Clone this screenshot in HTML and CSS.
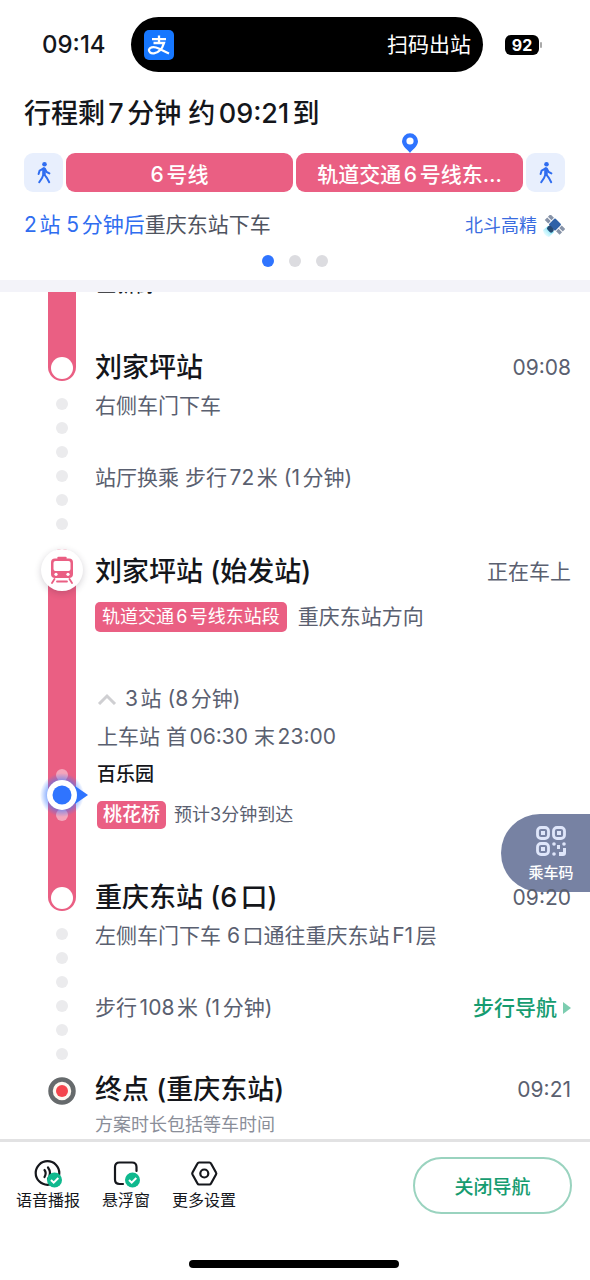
FILE: index.html
```html
<!DOCTYPE html>
<html lang="zh-CN">
<head>
<meta charset="utf-8">
<meta name="viewport" content="width=device-width, initial-scale=1">
<title>行程导航</title>
<link rel="stylesheet" href="styles.css">
</head>
<body>
<div class="status">
  <time class="clock">09:14</time>
  <div class="island">
    <svg class="pay" viewBox="0 0 30 30" aria-hidden="true">
      <rect width="30" height="30" rx="5" fill="#1677ff"/>
      <path d="M8 9.2H22M15 5.5V13M9.5 13H20C18.8 17 15.5 22.5 10 23.3C6.5 23.8 4.5 21.8 5 19.6C5.6 17.4 9 16.6 12 17.5C16 18.7 20 21.5 25 23.5" fill="none" stroke="#fff" stroke-width="2.3"/>
    </svg>
    <span>扫码出站</span>
  </div>
  <div class="battery"><span class="level">92</span><span class="cap"></span></div>
</div>

<header class="summary">
  <h1>行程剩7分钟 约09:21到</h1>
  <div class="segments">
    <span class="walk">
      <svg viewBox="0 0 20 24" aria-hidden="true"><circle cx="10.5" cy="3.3" r="2.3"/><path d="M10 7.5L9.6 14M9.6 7.5L5.6 9.7L4.600 13M11 8L12.600 11L15.400 12.400M9.4 13.5L8 17L5.200 21.200M10.3 13.5L12.800 16.8L15.200 21.200"/><path d="M10 8V13" stroke-width="3.500"/></svg>
    </span>
    <span class="line">6号线</span>
    <span class="line current"><span class="line-text">轨道交通6号线东…</span>
      <svg class="pin" viewBox="0 0 18 20" aria-hidden="true"><path d="M9 20C7 17 1 13.5 1 8.3A8 8 0 0 1 17 8.3C17 13.5 11 17 9 20Z" fill="#2f74ff"/><circle cx="9" cy="8" r="3.6" fill="#fff"/></svg>
    </span>
    <span class="walk">
      <svg viewBox="0 0 20 24" aria-hidden="true"><circle cx="10.5" cy="3.3" r="2.3"/><path d="M10 7.5L9.6 14M9.6 7.5L5.6 9.7L4.600 13M11 8L12.600 11L15.400 12.400M9.4 13.5L8 17L5.200 21.200M10.3 13.5L12.800 16.8L15.200 21.200"/><path d="M10 8V13" stroke-width="3.500"/></svg>
    </span>
  </div>
  <div class="hint">
    <p><b>2站 5分钟后</b>重庆东站下车</p>
    <span class="gps">北斗高精
      <svg viewBox="0 0 22 22" aria-hidden="true">
        <defs><linearGradient id="beam" x1="1" y1="0" x2="0" y2="1"><stop offset="0" stop-color="#21c8ee"/><stop offset="1" stop-color="#8ff3ff" stop-opacity="0"/></linearGradient></defs>
        <path d="M5 11L11 17L6 22Q1 21 0 15Z" fill="url(#beam)"/>
        <g transform="rotate(45 12 9.500)">
          <rect x="7.500" y="5" width="9" height="9" rx="1" fill="#2f62a8"/>
          <rect x="8.500" y="13.500" width="7" height="5" rx="2" fill="#264a73"/>
          <path d="M1.500 5.500h5v3.500h-5zM1.500 10h5v3.500h-5zM17.500 5.500h5v3.500h-5zM17.500 10h5v3.500h-5z" fill="#8793a8"/>
        </g>
      </svg>
    </span>
  </div>
  <div class="pager"><i class="on"></i><i></i><i></i></div>
</header>

<main class="route">
  <section class="leg first">
    <div class="rail"><span class="ring"></span></div>
    <div class="body">
      <p class="stop passed">上新街</p>
      <div class="row"><h2>刘家坪站</h2><time>09:08</time></div>
    </div>
  </section>

  <section class="leg onfoot">
    <div class="dots"><i></i><i></i><i></i><i></i><i></i><i></i></div>
    <div class="body">
      <p>右侧车门下车</p>
      <p class="transfer">站厅换乘 步行72米 (1分钟)</p>
    </div>
  </section>

  <section class="leg ride">
    <div class="rail">
      <span class="train">
        <svg viewBox="0 0 26 28" aria-hidden="true"><path d="M9.500 2h7" stroke="#ea5f83" stroke-width="2.500" stroke-linecap="round"/><rect x="2" y="2.500" width="22" height="19.500" rx="4" fill="#ea5f83"/><rect x="4.500" y="5" width="17" height="10" rx="2" fill="#fff"/><circle cx="7" cy="18.300" r="1.600" fill="#fff"/><circle cx="19" cy="18.300" r="1.600" fill="#fff"/><path d="M5.500 23L3 27M20.500 23L23 27M8 25.500h10" stroke="#ea5f83" stroke-width="1.800" stroke-linecap="round"/></svg>
      </span>
      <span class="ring"></span>
    </div>
    <div class="body">
      <div class="row start"><h2>刘家坪站 (始发站)</h2><span>正在车上</span></div>
      <div class="direction"><span class="tag">轨道交通6号线东站段</span><span>重庆东站方向</span></div>
      <button class="fold" type="button"><svg viewBox="0 0 20 12" aria-hidden="true"><path d="M2 11L10 3L18 11" fill="none" stroke="#cfcfd2" stroke-width="3"/></svg>3站 (8分钟)</button>
      <p class="hours">上车站 首06:30 末23:00</p>
      <div class="stops">
        <svg class="locator" viewBox="0 0 60 60" aria-hidden="true">
          <defs><radialGradient id="glow"><stop offset=".55" stop-color="#3a78ff" stop-opacity=".75"/><stop offset="1" stop-color="#3a78ff" stop-opacity="0"/></radialGradient></defs>
          <circle cx="30" cy="10" r="6" fill="#f4a5bb"/><circle cx="30" cy="50" r="6" fill="#f4a5bb"/>
          <circle cx="30" cy="30" r="22" fill="url(#glow)"/>
          <path d="M43 21L56 30L43 39Z" fill="#2f74ff"/>
          <circle cx="30" cy="30" r="15" fill="#fff"/><circle cx="30" cy="30" r="9.500" fill="#2f74ff"/>
        </svg>
        <p class="stop">百乐园</p>
        <p class="next"><span class="tag small">桃花桥</span>预计3分钟到达</p>
      </div>
      <div class="row"><h2>重庆东站 (6口)</h2><time>09:20</time></div>
    </div>
  </section>

  <section class="leg onfoot">
    <div class="dots"><i></i><i></i><i></i><i></i><i></i><i></i></div>
    <div class="body">
      <p>左侧车门下车 6口通往重庆东站F1层</p>
      <div class="row transfer"><p>步行108米 (1分钟)</p>
        <a class="guide" href="#walk">步行导航<svg viewBox="0 0 8 14" aria-hidden="true"><path d="M0 1L8 7L0 13Z" fill="#7ccdb0"/></svg></a>
      </div>
    </div>
  </section>

  <section class="leg end">
    <svg class="target" viewBox="0 0 28 28" aria-hidden="true"><circle cx="14" cy="14" r="11.500" fill="#fdf8f0" stroke="#666a6c" stroke-width="4.500"/><circle cx="14" cy="14" r="6" fill="#f4454c"/></svg>
    <div class="body">
      <div class="row"><h2>终点 (重庆东站)</h2><time>09:21</time></div>
      <p class="note">方案时长包括等车时间</p>
    </div>
  </section>

  <button class="code" type="button">
    <svg viewBox="0 0 30 30" aria-hidden="true" fill="none" stroke="#dfe6fa" stroke-width="2.800"><rect x="1.500" y="1.500" width="11" height="11" rx="3.500"/><rect x="17.500" y="1.500" width="11" height="11" rx="3.500"/><rect x="1.500" y="17.500" width="11" height="11" rx="3.500"/><g fill="#dfe6fa" stroke="none"><rect x="5" y="5" width="4" height="4"/><rect x="21" y="5" width="4" height="4"/><rect x="5" y="21" width="4" height="4"/><circle cx="18" cy="18" r="1.800"/><circle cx="28" cy="18" r="1.800"/><circle cx="18" cy="28" r="1.800"/><path d="M21 19h3v4h-3zM27 22h3v5q0 3-3 3h-4v-4h4z"/></g></svg>
    <span>乘车码</span>
  </button>
</main>

<footer class="bar">
  <nav class="tools">
    <button type="button">
      <svg viewBox="0 0 28 28" aria-hidden="true"><g fill="none" stroke="#15171c" stroke-width="2.200" stroke-linecap="round"><circle cx="13.500" cy="13" r="11.800"/><path d="M10.500 10Q12.800 13 10.500 17M14 7.500Q18 13 14 19"/></g><circle cx="20.500" cy="20" r="7.500" fill="#0fb98e"/><path d="M17 20L19.700 22.700L24.300 18" fill="none" stroke="#fff" stroke-width="2"/></svg>
      <span>语音播报</span>
    </button>
    <button type="button">
      <svg viewBox="0 0 28 28" aria-hidden="true"><path d="M11 24H7.500Q3 24 3 19.500V7Q3 2.500 7.500 2.500H20Q24.500 2.500 24.500 7V11" fill="none" stroke="#15171c" stroke-width="2.200" stroke-linecap="round"/><circle cx="20.500" cy="20" r="7.500" fill="#0fb98e"/><path d="M17 20L19.700 22.700L24.300 18" fill="none" stroke="#fff" stroke-width="2"/></svg>
      <span>悬浮窗</span>
    </button>
    <button type="button">
      <svg viewBox="0 0 28 28" aria-hidden="true"><g fill="none" stroke="#15171c" stroke-width="2.200" stroke-linejoin="round"><path d="M9 2.500H19.500Q20.500 2.500 21 3.500L26 12.500Q26.600 13.500 26 14.500L21 23.500Q20.500 24.500 19.500 24.500H9Q8 24.500 7.500 23.500L2.500 14.500Q2 13.500 2.500 12.500L7.500 3.500Q8 2.500 9 2.500Z"/><circle cx="14.300" cy="13.500" r="4"/></g></svg>
      <span>更多设置</span>
    </button>
  </nav>
  <button class="close" type="button">关闭导航</button>
  <div class="home"></div>
</footer>
</body>
</html>
```
FILE: styles.css
```css
* { box-sizing: border-box; }

body {
  margin: 0;
  min-height: 100vh;
  display: flex;
  flex-direction: column;
  background: #fff;
  color: #14161b;
  font-family: Inter, "Noto Sans CJK SC", sans-serif;
  text-autospace: normal;
}

h1, h2, p { margin: 0; font-weight: 500; }
button { font: inherit; color: inherit; border: 0; padding: 0; background: none; cursor: pointer; }
svg { display: block; flex: none; }

.status {
  display: grid;
  grid-template-columns: 109px 1fr 85px;
  gap: 22px;
  align-items: center;
  padding-top: 17px;
}
.clock { padding-left: 42px; font-size: 24px; line-height: 28px; font-weight: 500; }
.island {
  height: 55px;
  padding: 0 12px 0 13px;
  border-radius: 28px;
  background: #000;
  color: #fff;
  font-size: 21px;
  line-height: 24px;
  display: flex;
  align-items: center;
  justify-content: space-between;
}
.pay { width: 30px; height: 30px; }
.battery { display: flex; align-items: center; gap: 1px; }
.level {
  width: 34px;
  border-radius: 6px;
  background: #000;
  color: #fff;
  font-size: 16px;
  line-height: 20px;
  font-weight: 700;
  text-align: center;
}
.cap { width: 2px; height: 6px; border-radius: 2px; background: #aaa; }

.summary { padding: 24px 25px 13px 24px; border-bottom: 12px solid #f3f3f9; }
.summary h1 { font-size: 27px; line-height: 36px; }
.segments { display: flex; gap: 3px; margin-top: 21px; }
.walk, .line {
  height: 39px;
  border-radius: 9px;
  display: flex;
  align-items: center;
  justify-content: center;
}
.walk { width: 39px; flex: none; background: #e8effd; }
.walk svg { width: 20px; height: 24px; fill: #2f6df0; stroke: #2f6df0; stroke-width: 2; stroke-linecap: round; }
.walk path { fill: none; }
.walk circle { stroke: none; }
.line {
  flex: 1 1 0;
  min-width: 0;
  padding: 0 12px;
  position: relative;
  background: #ea5f83;
  color: #fff;
  font-size: 21px;
  font-weight: 500;
}
.line-text { overflow: hidden; text-overflow: ellipsis; white-space: nowrap; }
.pin { position: absolute; left: 50%; bottom: 100%; width: 18px; height: 20px; margin-left: -9px; }
.hint { display: flex; justify-content: space-between; align-items: center; margin-top: 19px; }
.hint p { font-size: 21px; line-height: 28px; font-weight: 400; color: #4f545f; }
.hint b { font-weight: 400; color: #2f6df0; }
.gps { display: flex; align-items: center; gap: 6px; padding-top: 2px; font-size: 18px; line-height: 26px; color: #3a6ce0; }
.gps svg { width: 22px; height: 22px; }
.pager { display: flex; justify-content: center; gap: 15px; margin-top: 16px; }
.pager i { width: 12px; height: 12px; border-radius: 50%; background: #dcdce0; }
.pager .on { background: #2f74ff; }

.route { flex: 1; position: relative; overflow: hidden; }
.leg {
  display: grid;
  grid-template-columns: 28px minmax(0, 1fr);
  gap: 19px;
  padding: 0 19px 0 48px;
}
.leg p { font-size: 21px; line-height: 28px; font-weight: 400; color: #5a6070; }
.rail {
  display: flex;
  flex-direction: column;
  justify-content: space-between;
  align-items: center;
  border-radius: 0 0 14px 14px;
  background: #ea5f83;
}
.ring { width: 22px; height: 22px; margin: auto 0 2px; border-radius: 50%; background: #fff; }
.row { display: flex; align-items: center; justify-content: space-between; }
.row h2 { font-size: 27px; line-height: 26px; }
.row time, .row > span { position: relative; z-index: 2; font-size: 21px; line-height: 26px; color: #5a6070; }

.leg .stop { font-size: 19px; line-height: 28px; font-weight: 500; color: #14161b; padding-left: 2px; }
.first .passed { margin: -20px 0 55px; }

.onfoot { min-height: 166px; }
.dots { display: flex; flex-direction: column; align-items: center; gap: 12px; padding-top: 17px; }
.dots i { width: 12px; height: 12px; border-radius: 50%; background: #ebebed; }
.onfoot .body { padding-top: 11px; }
.onfoot .transfer { margin-top: 44px; }

.ride { padding-top: 2px; }
.ride .rail { border-top-left-radius: 14px; border-top-right-radius: 14px; }
.train {
  width: 42px;
  height: 42px;
  border-radius: 50%;
  background: #fff;
  box-shadow: 0 2px 7px rgba(40, 30, 50, .2);
  display: grid;
  place-items: center;
}
.train svg { width: 26px; height: 28px; }
.start { height: 46px; }
.direction { display: flex; align-items: center; gap: 11px; margin-top: 7px; font-size: 21px; line-height: 30px; color: #5a6070; }
.tag { padding: 0 7px; border-radius: 5px; background: #ea5f83; color: #fff; font-size: 18px; line-height: 30px; }
.fold {
  display: flex;
  align-items: center;
  gap: 8px;
  margin-top: 53px;
  padding-left: 2px;
  font-size: 21px;
  line-height: 28px;
  color: #5a6070;
}
.fold svg { width: 20px; height: 12px; }
.leg .hours { margin-top: 10px; padding-left: 2px; }
.stops { position: relative; margin: 10px 0 56px; }
.locator { position: absolute; left: -63px; top: 50%; width: 60px; height: 60px; margin-top: -30px; }
.leg .next { display: flex; align-items: center; gap: 8px; margin-top: 12px; padding-left: 2px; font-size: 18px; text-autospace: no-autospace; }
.small { padding: 0 6px; font-size: 19px; line-height: 28px; font-weight: 500; }

.leg .guide { display: flex; align-items: center; gap: 6px; color: #169c70; font-size: 21px; line-height: 28px; font-weight: 500; text-decoration: none; }
.guide svg { width: 8px; height: 14px; }
.target { width: 28px; height: 28px; }
.leg .note { margin-top: 9px; font-size: 18px; line-height: 26px; color: #8a8e99; }

.code {
  position: absolute;
  right: 0;
  bottom: 247px;
  z-index: 1;
  width: 89px;
  height: 78px;
  padding: 4px 0 0 11px;
  border-radius: 39px 0 0 39px;
  background: #7782a3;
  color: #fff;
  font-size: 15px;
  line-height: 22px;
  font-weight: 500;
  display: flex;
  flex-direction: column;
  align-items: center;
  justify-content: center;
  gap: 6px;
}
.code svg { width: 30px; height: 30px; }

.bar {
  display: grid;
  grid-template-columns: 1fr 159px;
  align-items: center;
  padding: 15px 18px 12px 16px;
  border-top: 3px solid #e2e2e3;
}
.tools { display: flex; gap: 22px; }
.tools button { display: flex; flex-direction: column; align-items: center; font-size: 16px; line-height: 24px; }
.tools svg { width: 28px; height: 28px; }
.close { height: 57px; border: 2px solid #9ad3bf; border-radius: 29px; color: #169c70; font-size: 19px; font-weight: 500; }
.home { grid-column: 1 / -1; justify-self: center; width: 210px; height: 8px; margin-top: 46px; border-radius: 4px; background: #000; }
```
